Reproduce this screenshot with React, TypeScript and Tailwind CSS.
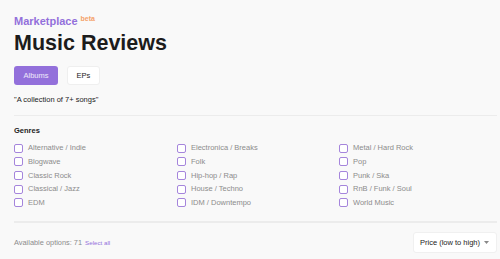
import React from 'react';

const genres = [
  ['Alternative / Indie', 'Blogwave', 'Classic Rock', 'Classical / Jazz', 'EDM'],
  ['Electronica / Breaks', 'Folk', 'Hip-hop / Rap', 'House / Techno', 'IDM / Downtempo'],
  ['Metal / Hard Rock', 'Pop', 'Punk / Ska', 'RnB / Funk / Soul', 'World Music'],
];

const GenreBox = ({ label }: { label: string }) => (
  <label className="flex h-[13.65px] items-center gap-[5px]">
    <span className="h-[9px] w-[9px] shrink-0 rounded-[2px] border-[1.5px] border-[#a585dc] bg-white"></span>
    <span className="text-[7.5px] leading-[10px] text-[#8c8c8c]">{label}</span>
  </label>
);

const App = () => {
  return (
    <div className="h-[259px] w-[500px] overflow-hidden bg-[#f9f9f9] pl-[14px] pr-[3px] pt-[14.6px] font-['Liberation_Sans',Arial,sans-serif]">
      <div className="text-[11px] leading-[13px] font-bold text-[#9370db]">
        Marketplace
        <sup className="ml-[3px] text-[7px] font-bold text-[#f5a26a]">beta</sup>
      </div>
      <h1 className="mt-[3.4px] text-[21.5px] leading-[24px] font-bold text-[#1c1c1c]">Music Reviews</h1>

      <div className="mt-[11px] flex gap-[9px]">
        <button className="flex h-[19px] w-[44px] items-center justify-center rounded-[3px] bg-[#9370db] text-[7.5px] text-white/85">
          Albums
        </button>
        <button className="flex h-[19px] w-[33px] items-center justify-center rounded-[3px] border border-[#efefef] bg-white text-[7.5px] text-[#222]">
          EPs
        </button>
      </div>

      <p className="mt-[10px] text-[7.5px] leading-[10px] text-[#222]">"A collection of 7+ songs"</p>

      <div className="mt-[10px] h-[1.5px] bg-[#ececec]"></div>

      <h3 className="mt-[10px] text-[7.5px] leading-[10px] font-bold text-[#222]">Genres</h3>

      <div className="mt-[5px] grid grid-cols-[163px_162px_1fr]">
        {genres.map((col, i) => (
          <div key={i} className="flex flex-col">
            {col.map((g) => (
              <GenreBox key={g} label={g} />
            ))}
          </div>
        ))}
      </div>

      <div className="mt-[11.6px] h-[1.5px] bg-[#ececec]"></div>

      <div className="mt-[9.5px] flex items-center justify-between">
        <div className="flex items-baseline gap-[3px]">
          <span className="text-[7.4px] text-[#8c8c8c]">Available options: 71</span>
          <span className="text-[6.2px] text-[#9370db]">Select all</span>
        </div>
        <div className="flex h-[21px] w-[84px] items-center justify-between rounded-[3px] border border-[#f0f0f0] bg-white pl-[6px] pr-[7px]">
          <span className="text-[7.5px] text-[#222]">Price (low to high)</span>
          <svg width="5" height="3" viewBox="0 0 5 3">
            <path d="M0 0 L5 0 L2.5 3 Z" fill="#888" />
          </svg>
        </div>
      </div>
    </div>
  );
};

export default App;
